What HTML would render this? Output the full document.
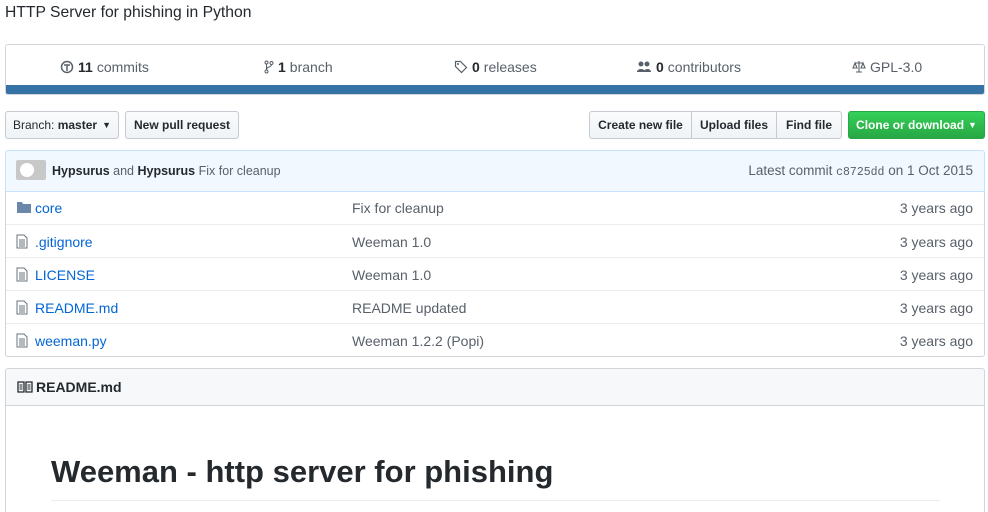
<!DOCTYPE html>
<html style="overflow:hidden;height:512px"><head><meta charset="utf-8"><style>
*{box-sizing:border-box;margin:0;padding:0}
body{width:988px;height:512px;overflow:hidden;background:#fff;font-family:"Liberation Sans",sans-serif;font-size:13.5px;color:#24292e;position:relative}
.abs{position:absolute}
.desc{left:5px;top:4px;font-size:15.7px;color:#24292e}
.stats{left:5px;top:44px;width:980px;height:51px;border:1px solid #d1d5da;border-radius:3px;overflow:hidden}
.stats .bar{position:absolute;left:0;right:0;bottom:0;height:9px;background:#3572a5}
.stat{position:absolute;top:14px;font-size:14px;color:#586069;display:flex;align-items:center;gap:4px;white-space:nowrap}
.stat b{color:#24292e}
.btn{position:absolute;top:111px;height:28px;border:1px solid #c6cbd1;background:linear-gradient(#fafbfc,#eff3f6);border-radius:3px;font-size:12px;font-weight:bold;color:#24292e;display:flex;align-items:center;justify-content:center;white-space:nowrap}
.commit{left:5px;top:150px;width:980px;height:42px;background:#f1f8ff;border:1px solid #c8e1ff;border-radius:3px 3px 0 0}
.files{left:5px;top:191px;width:980px;height:166px;border:1px solid #d1d5da;border-top:none;border-radius:0 0 3px 3px}
.row{position:absolute;left:0;right:0;height:33px;border-top:1px solid #eaecef;font-size:14px}
.row .n{position:absolute;left:29px;top:9px;color:#0366d6}
.row .m{position:absolute;left:346px;top:9px;color:#586069}
.row .t{position:absolute;right:11px;top:9px;color:#586069}
.row svg{position:absolute;left:10px;top:9px}
.rh{left:5px;top:368px;width:980px;height:38px;background:#f6f8fa;border:1px solid #d1d5da;border-radius:3px 3px 0 0}
.rb{left:5px;top:405px;width:980px;height:107px;border:1px solid #d1d5da;border-top:none;border-bottom:none}
</style></head><body>
<div class="abs desc">HTTP Server for phishing in Python</div>
<div class="abs stats">
 <div class="stat" style="left:54px"><svg width="14" height="14" viewBox="0 0 14 14"><circle cx="7" cy="7" r="5.5" fill="none" stroke="#586069" stroke-width="1.5"/><path d="M4 5h6M7 5v6" stroke="#586069" stroke-width="1.5"/></svg><b>11</b> commits</div>
 <div class="stat" style="left:258px"><svg width="10" height="14" viewBox="0 0 10 14"><circle cx="2.5" cy="2.5" r="1.5" fill="none" stroke="#586069"/><circle cx="2.5" cy="11.5" r="1.5" fill="none" stroke="#586069"/><circle cx="7.5" cy="3" r="1.5" fill="none" stroke="#586069"/><path d="M2.5 4v6M7.5 4.5c0 3-5 2-5 5" fill="none" stroke="#586069"/></svg><b>1</b> branch</div>
 <div class="stat" style="left:448px"><svg width="14" height="14" viewBox="0 0 14 14"><path d="M1.5 1.5h5l6 6-5 5-6-6z" fill="none" stroke="#586069" stroke-width="1.2"/><circle cx="4" cy="4" r="1" fill="#586069"/></svg><b>0</b> releases</div>
 <div class="stat" style="left:630px"><svg width="16" height="14" viewBox="0 0 16 14"><circle cx="5" cy="4" r="2.5" fill="#586069"/><circle cx="11" cy="4" r="2.5" fill="#586069"/><path d="M1 12c0-4 8-4 8 0zM8 12c0-4 7-4 7 0z" fill="#586069"/></svg><b>0</b> contributors</div>
 <div class="stat" style="left:846px"><svg width="14" height="14" viewBox="0 0 14 14"><path d="M7 1v11M3 3h8M1 8l2-5 2 5zM9 8l2-5 2 5zM4 12h6" fill="none" stroke="#586069" stroke-width="1.1"/></svg>GPL-3.0</div>
 <div class="bar"></div>
</div>
<div class="btn" style="left:5px;width:114px;font-weight:normal"><span>Branch: <b>master</b></span><span style="margin-left:5px;font-size:9px">▼</span></div>
<div class="btn" style="left:125px;width:114px">New pull request</div>
<div class="btn" style="left:589px;width:103px;border-radius:3px 0 0 3px">Create new file</div>
<div class="btn" style="left:691px;width:86px;border-radius:0">Upload files</div>
<div class="btn" style="left:776px;width:66px;border-radius:0 3px 3px 0">Find file</div>
<div class="btn" style="left:848px;width:137px;background:linear-gradient(#34d058,#28a745);border-color:#28a745;color:#fff">Clone or download <span style="font-size:9px;margin-left:4px">▼</span></div>
<div class="abs commit">
 <div class="abs" style="left:10px;top:9px;width:30px;height:20px;background:#c8c8c8;border-radius:2px"><div style="position:absolute;left:4px;top:3px;width:14px;height:14px;border-radius:50%;background:#fff"></div></div>
 <div class="abs" style="left:46px;top:13px;font-size:12.5px;color:#586069"><b style="color:#24292e">Hypsurus</b> and <b style="color:#24292e">Hypsurus</b> Fix for cleanup</div>
 <div class="abs" style="right:11px;top:12px;font-size:13.5px;color:#586069">Latest commit <span style="font-family:'Liberation Mono',monospace;font-size:11.5px">c8725dd</span> on 1 Oct 2015</div>
</div>
<div class="abs files">
 <div class="row" style="top:0;border-top:none"><svg width="16" height="14" viewBox="0 0 16 14"><path d="M1 2h5l1 2h8v9H1z" fill="#6a86a8"/></svg><span class="n">core</span><span class="m">Fix for cleanup</span><span class="t">3 years ago</span></div>
 <div class="row" style="top:33px"><svg width="12" height="15" viewBox="0 0 12 15"><path d="M1 1h7l3 3v10H1z" fill="none" stroke="#6a737d"/><path d="M3 6h6M3 8h6M3 10h6M3 12h6" stroke="#6a737d"/></svg><span class="n">.gitignore</span><span class="m">Weeman 1.0</span><span class="t">3 years ago</span></div>
 <div class="row" style="top:66px"><svg width="12" height="15" viewBox="0 0 12 15"><path d="M1 1h7l3 3v10H1z" fill="none" stroke="#6a737d"/><path d="M3 6h6M3 8h6M3 10h6M3 12h6" stroke="#6a737d"/></svg><span class="n">LICENSE</span><span class="m">Weeman 1.0</span><span class="t">3 years ago</span></div>
 <div class="row" style="top:99px"><svg width="12" height="15" viewBox="0 0 12 15"><path d="M1 1h7l3 3v10H1z" fill="none" stroke="#6a737d"/><path d="M3 6h6M3 8h6M3 10h6M3 12h6" stroke="#6a737d"/></svg><span class="n">README.md</span><span class="m">README updated</span><span class="t">3 years ago</span></div>
 <div class="row" style="top:132px"><svg width="12" height="15" viewBox="0 0 12 15"><path d="M1 1h7l3 3v10H1z" fill="none" stroke="#6a737d"/><path d="M3 6h6M3 8h6M3 10h6M3 12h6" stroke="#6a737d"/></svg><span class="n">weeman.py</span><span class="m">Weeman 1.2.2 (Popi)</span><span class="t">3 years ago</span></div>
</div>
<div class="abs rh">
 <svg class="abs" style="left:11px;top:12px" width="16" height="12" viewBox="0 0 16 12"><path d="M1 1h6v10H1zM9 1h6v10H9z" fill="none" stroke="#24292e" stroke-width="1.3"/><path d="M2.5 4h3M2.5 6h3M2.5 8h3M10.5 4h3M10.5 6h3M10.5 8h3" stroke="#24292e"/></svg>
 <div class="abs" style="left:30px;top:10px;font-size:14px;font-weight:bold">README.md</div>
</div>
<div class="abs rb">
 <div class="abs" style="left:45px;top:49px;font-size:31px;font-weight:bold;color:#24292e;white-space:nowrap">Weeman - http server for phishing</div>
 <div class="abs" style="left:45px;top:95px;width:889px;height:1px;background:#eaecef"></div>
</div>
</body></html>
